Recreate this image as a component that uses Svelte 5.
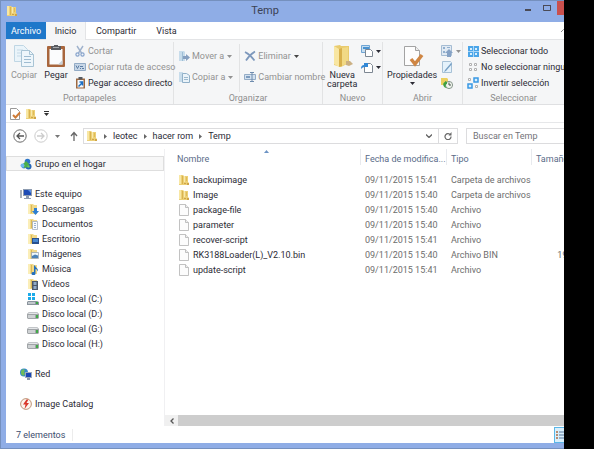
<script lang="ts">
  type Place = { label: string; icon: string; level: number; gap?: boolean; active?: boolean }
  type Entry = { name: string; folder?: boolean; date: string; type: string; size?: string }

  const places: Place[] = [
    { label: 'Grupo en el hogar', icon: 'homegroup', level: 0, active: true },
    { label: 'Este equipo', icon: 'computer', level: 0, gap: true },
    { label: 'Descargas', icon: 'downloads', level: 1 },
    { label: 'Documentos', icon: 'documents', level: 1 },
    { label: 'Escritorio', icon: 'desktop', level: 1 },
    { label: 'Imágenes', icon: 'pictures', level: 1 },
    { label: 'Música', icon: 'music', level: 1 },
    { label: 'Vídeos', icon: 'videos', level: 1 },
    { label: 'Disco local (C:)', icon: 'system-disk', level: 1 },
    { label: 'Disco local (D:)', icon: 'disk', level: 1 },
    { label: 'Disco local (G:)', icon: 'disk', level: 1 },
    { label: 'Disco local (H:)', icon: 'disk', level: 1 },
    { label: 'Red', icon: 'network', level: 0, gap: true },
    { label: 'Image Catalog', icon: 'catalog', level: 0, gap: true },
  ]

  const entries: Entry[] = [
    { name: 'backupimage', folder: true, date: '09/11/2015 15:41', type: 'Carpeta de archivos' },
    { name: 'Image', folder: true, date: '09/11/2015 15:40', type: 'Carpeta de archivos' },
    { name: 'package-file', date: '09/11/2015 15:40', type: 'Archivo' },
    { name: 'parameter', date: '09/11/2015 15:40', type: 'Archivo' },
    { name: 'recover-script', date: '09/11/2015 15:41', type: 'Archivo' },
    { name: 'RK3188Loader(L)_V2.10.bin', date: '09/11/2015 15:40', type: 'Archivo BIN', size: '194 KB' },
    { name: 'update-script', date: '09/11/2015 15:41', type: 'Archivo' },
  ]

  const crumbs = ['leotec', 'hacer rom', 'Temp']

  let search = $state('')
</script>

{#snippet folderBase()}
  <path d="M1 1h5l1 1h3v9H1z" fill="#f1d98a" />
  <path d="M1 1h2v10H1z" fill="#fbeeb8" />
  <path d="M4 2h1v8H4z" fill="#dcb955" />
{/snippet}

{#snippet icon(name: string)}
  <svg class="icon" viewBox="0 0 12 12" aria-hidden="true">
    {#if name === 'folder'}
      <path d="M1 1h4l1 1h4v6l1 1v2H1z" fill="#ecd077" />
      <path d="M1 1h2v9H1z" fill="#f8e7a4" />
      <path d="M4 2h1v8H4z" fill="#d9b350" />
      <path d="M6 2h1v6H6z" fill="#f8e9ad" />
      <path d="M8 3h1v4H8z" fill="#e0bb58" />
      <path d="M6 9h2v1H6zM9 9h2v2H9z" fill="#cfa449" />
    {:else if name === 'file'}
      <path d="M1.500.5h6l3 3v8h-9z" fill="#fcfcfc" stroke="#b2b2b2" stroke-width=".8" />
      <path d="M7.500.5v3h3" fill="#eee" stroke="#b2b2b2" stroke-width=".8" />
    {:else if name === 'check-file'}
      <path d="M1.500.5h6l3 3v8h-9z" fill="#fff" stroke="#8d8d8d" stroke-width=".9" />
      <path d="M4 7l2.500 2.500L11 4.500" fill="none" stroke="#cf7b36" stroke-width="2" />
    {:else if name === 'homegroup'}
      <circle cx="4" cy="8" r="2.500" fill="#4a90d8" />
      <circle cx="8.500" cy="8.500" r="3" fill="#2465b8" />
      <circle cx="7.500" cy="3.500" r="2.800" fill="#2c76c9" />
      <path d="M3 6l3-3 3 3-1 3-4 1z" fill="#4bb04a" />
      <circle cx="2.500" cy="7.500" r="2" fill="#6fb7ee" />
      <circle cx="8.500" cy="8.500" r="1.200" fill="#69c75f" />
    {:else if name === 'computer'}
      <path d="M0 2h2v8H0z" fill="#a8b0ba" />
      <path d="M3 1h9v7H3z" fill="#8d9bb0" />
      <path d="M4 2h7v5H4z" fill="#1d4bb5" />
      <path d="M8 2h3v3z" fill="#5c93e8" />
      <path d="M6 8h3v2h2v1H4v-1h2z" fill="#8d9bb0" />
    {:else if name === 'downloads'}
      {@render folderBase()}
      <path d="M7 5h3v3h2l-3.500 4L5 8h2z" fill="#2d7ed2" />
    {:else if name === 'documents'}
      {@render folderBase()}
      <path d="M5.500 3.500h5v8h-5z" fill="#f8fbff" stroke="#98a5b5" stroke-width=".7" />
      <path d="M7 5.500h2M7 7.500h2M7 9.500h2" stroke="#7f9dc0" stroke-width=".8" />
    {:else if name === 'desktop'}
      {@render folderBase()}
      <path d="M5 5h7v6H5z" fill="#28508e" />
      <path d="M6 6h5v3H6z" fill="#4787d1" />
    {:else if name === 'pictures'}
      {@render folderBase()}
      <path d="M4.500 4.500h7v6h-7z" fill="#edf6fb" stroke="#8d9baa" stroke-width=".7" />
      <path d="M5 8l3-1.500 3 1v2.500H5z" fill="#4b82b8" />
    {:else if name === 'music'}
      {@render folderBase()}
      <path d="M7 3l1-1c0 3 4 3 2.500 6.500C10 6 8.500 6 8.500 6v4.500a2 1.600 0 1 1-1.500-1.500z" fill="#246fbd" />
    {:else if name === 'videos'}
      {@render folderBase()}
      <path d="M5 3h6v9H5z" fill="#4c5869" />
      <path d="M6.500 4h3v3h-3zM6.500 8h3v3h-3z" fill="#91abc7" />
    {:else if name === 'system-disk'}
      <path d="M1 0h3v3H1zM5 0h3v3H5zM1 4h3v3H1zM5 4h3v3H5z" fill="#1cabe9" />
      <path d="M1 8h9l2 1v3H0V9z" fill="#8b949d" />
      <path d="M1 9h7v2H1z" fill="#c1c7cc" />
      <path d="M9 9h2v2H9z" fill="#37a943" />
    {:else if name === 'disk'}
      <path d="M2 4h8l2 2v4l-1 1H1l-1-1V6z" fill="#a1a5a8" />
      <path d="M2 4.500h8l1 1.500H1z" fill="#e4e6e8" />
      <path d="M1 7h7v3H1z" fill="#ced1d3" />
      <path d="M9 7h2v3H9z" fill="#42a948" />
    {:else if name === 'network'}
      <circle cx="4" cy="4.500" r="4" fill="#3688c9" />
      <path d="M1 3l2-2 2 1-1 2 1 2-2 2-2-2z" fill="#6dbb5b" />
      <path d="M5 4h7v6H5z" fill="#9caabd" />
      <path d="M6 5h5v4H6z" fill="#1b46b4" />
      <path d="M7 10h3v2H7z" fill="#8b98a9" />
    {:else if name === 'catalog'}
      <circle cx="6" cy="6" r="5.400" fill="#fbf3ec" stroke="#b88b6c" stroke-width=".9" />
      <path d="M6.500 1.500L3 6.500h2.500L4.500 11 9 5H6.500l2-3.500z" fill="#d9372a" />
    {:else if name === 'cut'}
      <path d="M3 1l4.500 7M9 1L4.500 8" stroke="#9fb2cc" stroke-width="1.400" fill="none" />
      <circle cx="3.500" cy="9.500" r="1.600" fill="none" stroke="#86a3cb" stroke-width="1.200" />
      <circle cx="8.500" cy="9.500" r="1.600" fill="none" stroke="#86a3cb" stroke-width="1.200" />
    {:else if name === 'copy-path'}
      <path d="M.5 2.500h11v7H.5z" fill="#c8d7e7" stroke="#93abc5" />
      <path d="M2 4.500l1.500 3L5 4.500M6 7.500h1M8 7.500h2M6 5.500h3" stroke="#5c7da4" fill="none" />
    {:else if name === 'paste-link'}
      <path d="M2 1.500h9v10H2z" fill="#9c6840" />
      <path d="M3.500 3h6v7.500h-6z" fill="#f4f8fc" />
      <path d="M4.500 0h4v2.500h-4z" fill="#55595f" />
      <path d="M4.500 9.500L8 6M5.500 5h3v3.500" stroke="#1c6fc4" stroke-width="1.500" fill="none" />
    {:else if name === 'move-to'}
      <path d="M1 1h5l1 1v9H1z" fill="#c7dceb" />
      <path d="M4 2h1v9H4z" fill="#9dbdd4" />
      <path d="M5 6h3V4l4 3.500L8 11V9H5z" fill="#86a0c0" />
    {:else if name === 'copy-to'}
      <path d="M1 1h4v10H1z" fill="#c7dceb" />
      <path d="M4.500 2.500h4l3 2v7h-7z" fill="#eaf3f9" stroke="#91b0c8" />
      <path d="M6 6.500h4M6 8.500h4" stroke="#9db9ce" />
    {:else if name === 'delete'}
      <path d="M1 2c4 2 7 5 9.500 8.500M11 1.500C7 4 4 7 2 10.500" stroke="#7d98bc" stroke-width="1.700" fill="none" />
    {:else if name === 'rename'}
      <path d="M.5 3.500h11v5H.5z" fill="#d3e1ef" stroke="#94acc6" />
      <path d="M2 5h4v2H2z" fill="#7d9cbf" />
      <path d="M6 1.500h4M6 10.500h4M8 2v9" stroke="#6f8cae" />
    {:else if name === 'new-item'}
      <path d="M.5.500h8v7h-8z" fill="#c6def1" stroke="#6fa5d4" />
      <path d="M2 2h6v2H2z" fill="#4992d0" />
      <path d="M4.500 4.500h5l2 2v5h-7z" fill="#fff" stroke="#7d8792" />
    {:else if name === 'easy-access'}
      <path d="M3.500 2.500h6l2 2v7h-8z" fill="#fff" stroke="#7d8792" />
      <path d="M0 8c0-3 1-4 3-4V2h4v4H5C3 6 2 6 0 8z" fill="#3288d6" />
    {:else if name === 'open'}
      <path d="M.5.500h10v10H.5z" fill="#e1eaf3" stroke="#a5bcd3" />
      <path d="M2 2h2v2H2zM2 6h2v2H2zM6 2h3v1H6z" fill="#91afce" />
      <path d="M8 4l4 4h-2v4H6V8H4z" fill="#86a2c5" />
    {:else if name === 'edit'}
      <path d="M1.500.5h8l1 1v10h-9z" fill="#e5f2fb" stroke="#a7c1d6" />
      <path d="M4 9l6-7 1 1-6 7-2 1z" fill="#779fc4" />
    {:else if name === 'history'}
      <path d="M0 1h6l1 1v6H0z" fill="#ecd05f" />
      <circle cx="8" cy="8" r="3.600" fill="#f1f5ee" stroke="#7c8b80" stroke-width=".9" />
      <path d="M8 5.500V8h2" fill="none" stroke="#44544b" />
      <path d="M6 5v2c-2 0-2 3 0 4-4 0-5-5-2-6V4z" fill="#3da142" />
    {:else if name === 'select-all'}
      <path d="M1 1h11v11H1z" fill="#4ba5e8" />
      <path d="M3 3h2v2H3zM8 3h2v2H8zM3 8h2v2H3zM8 8h2v2H8z" fill="#d8effd" />
      <path d="M6 1h1v11H6zM1 6h11v1H1z" fill="#a9d6f7" />
    {:else if name === 'select-none'}
      <path d="M2.500 2.500h2v2h-2zM7.500 2.500h2v2h-2zM2.500 7.500h2v2h-2zM7.500 7.500h2v2h-2z" fill="#fff" stroke="#b0b0b0" />
    {:else if name === 'invert'}
      <path d="M1.500 1.500h2v2h-2zM8.500 8.500h2v2h-2z" fill="#fff" stroke="#b0b0b0" />
      <path d="M7 1h4v4H7zM1 7h4v4H1z" fill="#d8effd" stroke="#3998e4" stroke-width="1.500" />
    {/if}
  </svg>
{/snippet}

{#snippet caret()}
  <svg class="caret" viewBox="0 0 5 3" aria-hidden="true"><path d="M0 0h5L2.500 3z" fill="currentColor" /></svg>
{/snippet}

<div class="screen">
  <div class="window">
    <header class="titlebar">
      <span class="title-icon">{@render icon('folder')}</span>
      <h1>Temp</h1>
      <div class="controls">
        <button aria-label="Minimizar">
          <svg viewBox="0 0 8 8"><path d="M1 5h6v2H1z" fill="#4a4a55" /></svg>
        </button>
        <button aria-label="Maximizar">
          <svg viewBox="0 0 8 8"><path d="M.5 1.500h7v5h-7z" fill="none" stroke="#4a4a55" /><path d="M0 1h8v1H0z" fill="#4a4a55" /></svg>
        </button>
        <button class="close" aria-label="Cerrar"></button>
      </div>
    </header>

    <div class="client">
      <nav class="tabs">
        <button class="tab file">Archivo</button>
        <button class="tab active">Inicio</button>
        <button class="tab">Compartir</button>
        <button class="tab">Vista</button>
        <button class="collapse" aria-label="Minimizar la cinta">
          <svg viewBox="0 0 5 3"><path d="M0 3l2.500-2.500L5 3" fill="none" stroke="#888" /></svg>
        </button>
      </nav>

      <div class="ribbon">
        <section class="group">
          <div class="tools">
            <button class="big disabled">
              <svg class="big-icon" viewBox="0 0 24 24" aria-hidden="true">
                <path d="M2.500 1.500h9l4 4v12h-13z" fill="#eaf4fa" stroke="#bfd6e4" />
                <path d="M5 6h6M5 9h6M5 12h5" stroke="#c5d9e7" />
                <path d="M9.500 6.500h8l4 4v12h-12z" fill="#eef6fb" stroke="#a9c4d5" />
                <path d="M17.500 6.500v4h4" fill="none" stroke="#a9c4d5" />
                <path d="M12 12.500h7M12 15.500h7M12 18.500h7" stroke="#9fbcd1" />
              </svg>
              Copiar
            </button>
            <button class="big">
              <svg class="big-icon" viewBox="0 0 24 24" aria-hidden="true">
                <rect x="3" y="2" width="18" height="21" rx="1" fill="#a8663d" />
                <path d="M5.500 5h13v15.500h-13z" fill="#fbfcfd" />
                <path d="M14 20.500h4.500V16z" fill="#c8d0d8" />
                <path d="M7 2h3V1h4v1h3v4H7z" fill="#595c61" />
                <path d="M9 3h6v1H9z" fill="#a5a8ac" />
              </svg>
              Pegar
            </button>
            <div class="stack">
              <button class="small disabled">{@render icon('cut')}Cortar</button>
              <button class="small disabled">{@render icon('copy-path')}Copiar ruta de acceso</button>
              <button class="small">{@render icon('paste-link')}Pegar acceso directo</button>
            </div>
          </div>
          <h2>Portapapeles</h2>
        </section>

        <section class="group">
          <div class="tools organize">
            <div class="stack wide">
              <button class="small disabled">{@render icon('move-to')}Mover a {@render caret()}</button>
              <button class="small disabled">{@render icon('copy-to')}Copiar a {@render caret()}</button>
            </div>
            <div class="stack wide divided">
              <button class="small disabled">{@render icon('delete')}Eliminar <span class="dark">{@render caret()}</span></button>
              <button class="small disabled">{@render icon('rename')}Cambiar nombre</button>
            </div>
          </div>
          <h2>Organizar</h2>
        </section>

        <section class="group">
          <div class="tools">
            <button class="big">
              <svg class="big-icon" viewBox="0 0 24 24" aria-hidden="true">
                <path d="M4 2l6-1 1 1h8v17l-8 4-7-2z" fill="#e9cb6e" />
                <path d="M4 2l5 3v18l-5-3z" fill="#f8e6a2" />
                <path d="M9 5l3-1v18l-3 1z" fill="#d8b04c" />
                <path d="M12 4l6-1v16l-6 3z" fill="#f1d985" />
                <path d="M16 17l4 0 3 3-4 2-3-1z" fill="#cbb083" />
              </svg>
              <span>Nueva<br />carpeta</span>
            </button>
            <div class="stack">
              <button class="small" aria-label="Nuevo elemento">{@render icon('new-item')}{@render caret()}</button>
              <button class="small" aria-label="Fácil acceso">{@render icon('easy-access')}{@render caret()}</button>
            </div>
          </div>
          <h2>Nuevo</h2>
        </section>

        <section class="group">
          <div class="tools">
            <button class="big">
              <svg class="big-icon" viewBox="0 0 24 24" aria-hidden="true">
                <path d="M4.500 2.500h11l4 4v15h-15z" fill="#fdfdfd" stroke="#a3a3a3" />
                <path d="M15.500 2.500v4h4" fill="#eee" stroke="#a3a3a3" />
                <path d="M11 15l4 5 7-9" fill="none" stroke="#cf8644" stroke-width="3.500" />
              </svg>
              Propiedades
              <span class="below">{@render caret()}</span>
            </button>
            <div class="stack">
              <button class="small disabled" aria-label="Abrir">{@render icon('open')}{@render caret()}</button>
              <button class="small disabled" aria-label="Modificar">{@render icon('edit')}</button>
              <button class="small" aria-label="Historial">{@render icon('history')}</button>
            </div>
          </div>
          <h2>Abrir</h2>
        </section>

        <section class="group">
          <div class="tools">
            <div class="stack">
              <button class="small">{@render icon('select-all')}Seleccionar todo</button>
              <button class="small">{@render icon('select-none')}No seleccionar ninguno</button>
              <button class="small">{@render icon('invert')}Invertir selección</button>
            </div>
          </div>
          <h2>Seleccionar</h2>
        </section>
      </div>

      <div class="quick">
        <button aria-label="Propiedades">{@render icon('check-file')}</button>
        <button aria-label="Nueva carpeta">{@render icon('folder')}</button>
        <button aria-label="Personalizar">
          <svg class="more" viewBox="0 0 5 5"><path d="M0 0h5v1H0zM0 2h5L2.500 5z" fill="#333" /></svg>
        </button>
      </div>

      <div class="address-row">
        <button class="nav" aria-label="Atrás">
          <svg viewBox="0 0 14 14"><circle cx="7" cy="7" r="6.200" fill="none" stroke="#6a6a6a" /><path d="M11 7H4M7 4L4 7l3 3" fill="none" stroke="#555" stroke-width="1.300" /></svg>
        </button>
        <button class="nav" aria-label="Adelante">
          <svg viewBox="0 0 14 14"><circle cx="7" cy="7" r="6.200" fill="none" stroke="#ccc" /><path d="M3 7h7M7 4l3 3-3 3" fill="none" stroke="#ccc" stroke-width="1.300" /></svg>
        </button>
        <button class="recent" aria-label="Ubicaciones recientes">{@render caret()}</button>
        <button class="up" aria-label="Subir">
          <svg viewBox="0 0 8 10"><path d="M4 10V2M1 5l3-3.500L7 5" fill="none" stroke="#666" stroke-width="1.300" /></svg>
        </button>
        <div class="address">
          {@render icon('folder')}
          {#each crumbs as crumb (crumb)}
            <svg class="arrow" viewBox="0 0 3 5" aria-hidden="true"><path d="M0 0l3 2.500L0 5z" fill="#666" /></svg>
            <a href="#{crumb}">{crumb}</a>
          {/each}
          <button class="drop" aria-label="Ubicaciones anteriores">
            <svg viewBox="0 0 6 4"><path d="M0 .5L3 3.500 6 .5" fill="none" stroke="#666" stroke-width="1.300" /></svg>
          </button>
          <button class="refresh" aria-label="Actualizar">
            <svg viewBox="0 0 8 8"><path d="M6.500 3A3 3 0 1 0 7 4.500" fill="none" stroke="#666" stroke-width="1.200" /><path d="M4.500 3.500h3V0z" fill="#666" /></svg>
          </button>
        </div>
        <input class="search" type="text" placeholder="Buscar en Temp" aria-label="Buscar en Temp" bind:value={search} />
      </div>

      <div class="body">
        <nav class="sidebar">
          {#each places as place (place.label)}
            <a href="#{place.icon}" class="place" class:child={place.level === 1} class:gap={place.gap} class:current={place.active}>
              {@render icon(place.icon)}{place.label}
            </a>
          {/each}
        </nav>

        <main class="pane">
          <div class="list">
            <table>
              <colgroup>
                <col class="col-name" />
                <col class="col-date" />
                <col class="col-type" />
                <col class="col-size" />
              </colgroup>
              <thead>
                <tr>
                  <th><span>Nombre</span><svg class="sort" viewBox="0 0 5 3" aria-hidden="true"><path d="M0 3h5L2.500 0z" fill="#6c93c4" /></svg></th>
                  <th><span>Fecha de modifica...</span></th>
                  <th><span>Tipo</span></th>
                  <th><span>Tamaño</span></th>
                </tr>
              </thead>
              <tbody>
                {#each entries as entry (entry.name)}
                  <tr>
                    <td><div class="name">{@render icon(entry.folder ? 'folder' : 'file')}{entry.name}</div></td>
                    <td>{entry.date}</td>
                    <td>{entry.type}</td>
                    <td class="size">{entry.size ?? ''}</td>
                  </tr>
                {/each}
              </tbody>
            </table>
          </div>
          <div class="scrollbar">
            <button aria-label="Desplazar a la izquierda">
              <svg viewBox="0 0 4 6"><path d="M3.500.5L1 3l2.500 2.500" fill="none" stroke="#555" stroke-width="1.300" /></svg>
            </button>
            <div class="thumb"></div>
          </div>
        </main>
      </div>

      <footer class="status">
        <span>7 elementos</span>
        <button class="view" aria-label="Detalles">
          <svg viewBox="0 0 12 12"><path d="M1 2h2v2H1zM1 5h2v2H1zM1 8h2v2H1z" fill="#b98c72" /><path d="M4 3h7M4 6h7M4 9h7" stroke="#58779b" /></svg>
        </button>
      </footer>
    </div>
  </div>
  <div class="backdrop"></div>
</div>

<style>
  :global(body) {
    margin: 0;
    background: #000;
  }

  .screen {
    display: flex;
    min-height: 100vh;
    font-family: Roboto, 'Noto Sans', sans-serif;
    font-size: 9px;
    line-height: 12px;
    color: #2b2b35;
  }

  .backdrop {
    flex: 0 0 30px;
    background: #000;
  }

  .window {
    flex: 1;
    min-width: 0;
    display: flex;
    flex-direction: column;
    box-sizing: border-box;
    padding: 0 0 6px 6px;
    background: #8fade6;
    border-top: 1px solid #7590be;
    box-shadow: inset 1px -1px #7590be;
    overflow: hidden;
  }

  button {
    margin: 0;
    padding: 0;
    border: 0;
    background: none;
    font: inherit;
    color: inherit;
    white-space: nowrap;
  }

  a {
    color: inherit;
    text-decoration: none;
  }

  svg {
    display: block;
    flex-shrink: 0;
  }

  h1,
  h2 {
    margin: 0;
    font-weight: 400;
  }

  .icon {
    width: 12px;
    height: 12px;
  }

  .caret {
    width: 5px;
    height: 3px;
  }

  .titlebar {
    display: flex;
    height: 21px;
  }

  .title-icon {
    width: 12px;
    padding-top: 4px;
  }

  h1 {
    flex: 1;
    text-align: center;
    font-size: 11px;
    line-height: 20px;
    color: #3b4254;
  }

  .controls {
    display: flex;
    width: 52px;
    height: 14px;
    justify-content: flex-end;
  }

  .controls button {
    width: 19px;
    padding-left: 5px;
  }

  .controls svg {
    width: 8px;
    height: 8px;
  }

  .controls button.close {
    width: 7px;
    background: #c9504e;
  }

  .client {
    flex: 1;
    display: flex;
    flex-direction: column;
    background: #fff;
  }

  .tabs {
    display: flex;
    height: 17px;
    border-bottom: 1px solid #e3e4e6;
  }

  .tab {
    padding: 0 10px;
  }

  .tab.file {
    width: 40px;
    padding: 0;
    background: #1f78ca;
    color: #fff;
  }

  .tab.active {
    width: 40px;
    height: 18px;
    padding: 0;
    background: #f5f6f7;
    border-right: 1px solid #e3e4e6;
  }

  .collapse {
    margin-left: auto;
  }

  .collapse svg {
    width: 5px;
    height: 3px;
    margin-right: -2px;
  }

  .ribbon {
    display: grid;
    grid-template-columns: 168px 149px 60px 80px 1fr;
    height: 64px;
    background: #f5f6f7;
    border-bottom: 1px solid #dfe0e2;
  }

  .group {
    display: flex;
    flex-direction: column;
    min-width: 0;
    margin: 2px 0 0;
    border-right: 1px solid #e2e3e4;
  }

  .group:last-child {
    border-right: 0;
  }

  .tools {
    flex: 1;
    display: flex;
    padding: 2px 0 0 4px;
    gap: 4px;
  }

  h2 {
    font-size: 9px;
    text-align: center;
    color: #8d8d8d;
  }

  .big {
    display: flex;
    flex-direction: column;
    align-items: center;
    justify-content: flex-start;
    min-width: 28px;
    line-height: 9px;
  }

  .big-icon {
    width: 24px;
    height: 24px;
    margin-bottom: 3px;
  }

  .below {
    padding-top: 2px;
  }

  .stack {
    display: flex;
    flex-direction: column;
    gap: 4px;
    padding-top: 1px;
  }

  .small {
    display: flex;
    align-items: center;
    gap: 2px;
    height: 12px;
  }

  .small .caret {
    margin-left: 1px;
  }

  .organize {
    gap: 6px;
  }

  .stack.wide {
    gap: 9px;
    padding-top: 6px;
  }

  .stack.divided {
    padding-left: 4px;
    border-left: 1px solid #e2e3e4;
  }

  .disabled {
    color: #929292;
  }

  .dark {
    color: #444;
  }

  .quick {
    display: flex;
    align-items: center;
    gap: 4px;
    height: 17px;
    padding-left: 3px;
    border-bottom: 1px solid #e6e7e9;
  }

  .more {
    width: 5px;
    height: 5px;
    margin-left: 3px;
  }

  .address-row {
    display: flex;
    align-items: center;
    height: 26px;
    padding-left: 7px;
  }

  .nav {
    margin-right: 7px;
  }

  .nav svg {
    width: 14px;
    height: 14px;
  }

  .recent {
    padding: 0 6px 0 0;
    color: #777;
  }

  .up {
    padding: 0 5px 0 4px;
  }

  .up svg {
    width: 8px;
    height: 10px;
  }

  .address {
    flex: 1;
    display: flex;
    align-items: center;
    gap: 6px;
    box-sizing: border-box;
    height: 16px;
    padding-left: 2px;
    border: 1px solid #dcdcde;
  }

  .arrow {
    width: 3px;
    height: 5px;
  }

  .drop {
    margin-left: auto;
  }

  .drop svg {
    width: 6px;
    height: 4px;
  }

  .refresh {
    height: 14px;
    padding: 0 5px;
    border-left: 1px solid #dcdcde;
  }

  .refresh svg {
    width: 8px;
    height: 8px;
  }

  .search {
    box-sizing: border-box;
    width: 98px;
    height: 16px;
    margin-left: 8px;
    padding: 0 6px;
    border: 1px solid #dcdcde;
    border-right: 0;
    border-radius: 0;
    font: inherit;
  }

  .search::placeholder {
    color: #737378;
    opacity: 1;
  }

  .body {
    flex: 1;
    display: flex;
    min-height: 0;
  }

  .sidebar {
    flex: 0 0 158px;
    padding-top: 7px;
    border-right: 1px solid #f0f0f2;
  }

  .place {
    display: flex;
    align-items: center;
    gap: 3px;
    box-sizing: border-box;
    height: 15px;
    padding-left: 14px;
    white-space: nowrap;
  }

  .place.child {
    padding-left: 21px;
  }

  .place.gap {
    margin-top: 15px;
  }

  .place.current {
    background: #f7f7f7;
    outline: 1px solid #dedede;
    outline-offset: -1px;
  }

  .pane {
    flex: 1;
    min-width: 0;
    display: flex;
    flex-direction: column;
  }

  .list {
    flex: 1;
    overflow: hidden;
  }

  table {
    width: 440px;
    table-layout: fixed;
    border-collapse: collapse;
  }

  .col-name {
    width: 195px;
  }

  .col-date {
    width: 86px;
  }

  .col-type {
    width: 85px;
  }

  th {
    position: relative;
    height: 23px;
    padding: 0;
    vertical-align: top;
    text-align: left;
    font-weight: 400;
    color: #5a6b88;
    white-space: nowrap;
  }

  th span {
    display: block;
    padding: 4px 0 0 4px;
    border-left: 1px solid #e8eaee;
  }

  th:first-child span {
    padding-left: 12px;
    border-left: 0;
  }

  .sort {
    position: absolute;
    top: 1px;
    left: 99px;
    width: 5px;
    height: 3px;
  }

  td {
    height: 15px;
    padding: 0 0 0 5px;
    color: #6d6d6d;
    white-space: nowrap;
  }

  td:first-child {
    padding-left: 13px;
  }

  .name {
    display: flex;
    align-items: center;
    gap: 3px;
    color: #2b2b35;
  }

  td.size {
    padding-right: 19px;
    text-align: right;
  }

  .scrollbar {
    display: flex;
    height: 11px;
    background: #f0f0f0;
  }

  .scrollbar button {
    width: 13px;
    padding-left: 5px;
  }

  .scrollbar svg {
    width: 4px;
    height: 6px;
  }

  .thumb {
    flex: 1;
    background: #cdcdcd;
  }

  .status {
    display: flex;
    align-items: center;
    justify-content: space-between;
    height: 17px;
    padding-left: 10px;
    color: #3c4c6e;
  }

  .status span {
    padding-right: 7px;
    border-right: 1px solid #ececec;
  }

  .view {
    width: 10px;
    height: 16px;
    overflow: hidden;
    background: #d9effb;
    border: 1px solid #5bb7e8;
    border-right: 0;
  }

  .view svg {
    width: 12px;
    height: 12px;
  }
</style>
